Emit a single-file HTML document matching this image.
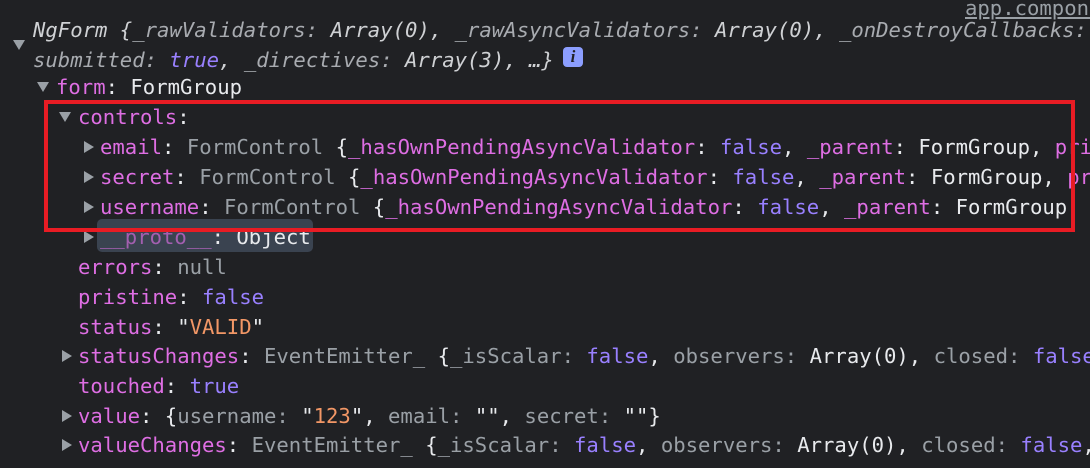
<!DOCTYPE html>
<html><head><meta charset="utf-8"><style>
html,body{margin:0;padding:0;}
body{width:1090px;height:468px;background:#202124;overflow:hidden;position:relative;font-family:Consolas,"DejaVu Sans Mono","Liberation Mono",monospace;font-size:20.6px;color:#e8eaed;}
.wrap{position:absolute;left:0;top:0;width:1090px;height:468px;overflow:hidden;}
.l{position:absolute;white-space:pre;line-height:30px;height:30px;}
.t{position:absolute;width:0;height:0;}
.d{border-left:6px solid transparent;border-right:6px solid transparent;border-top:10px solid #9aa0a6;}
.r{border-top:6px solid transparent;border-bottom:6px solid transparent;border-left:10px solid #9aa0a6;}
.k{color:#de6ee3}.g{color:#9aa0a6}.b{color:#9980ff}.s{color:#f29766}.i{font-style:italic;color:#cfd1d4}.ig{font-style:italic;color:#a8abb0}
.box{position:absolute;left:44px;top:100px;width:1023px;height:124px;border:4px solid #e81c24;}
</style></head><body><div class="wrap">
<div class="l g" style="left:965px;top:-7px;text-decoration:underline;">app.component</div>
<div class="t d" style="left:13px;top:40px"></div>
<div class="l i" style="left:33px;top:15px">NgForm {<span class="ig">_rawValidators:</span> Array(0), <span class="ig">_rawAsyncValidators:</span> Array(0), <span class="ig">_onDestroyCallbacks:</span> Array(0),</div>
<div class="l i" style="left:33px;top:45px"><span class="ig">submitted:</span> <span class="b">true</span>, <span class="ig">_directives:</span> Array(3), …}</div>
<div style="position:absolute;left:563px;top:47px;width:20px;height:20px;background:#8c9eff;border-radius:4px;color:#202124;font:bold 17px 'Liberation Serif',serif;font-style:italic;text-align:center;line-height:20px;">i</div>
<div class="t d" style="left:37px;top:82px"></div>
<div class="l" style="left:56px;top:72px"><span class="k">form</span>: FormGroup</div>
<div class="t d" style="left:59px;top:112px"></div>
<div class="l" style="left:78px;top:102px"><span class="k">controls</span>:</div>
<div class="t r" style="left:84px;top:141px"></div>
<div class="l" style="left:100px;top:132px"><span class="k">email</span>: <span class="g">FormControl</span> {<span class="k">_hasOwnPendingAsyncValidator</span>: <span class="b">false</span>, <span class="k">_parent</span>: FormGroup, <span class="k">pristine</span></div>
<div class="t r" style="left:84px;top:171px"></div>
<div class="l" style="left:100px;top:162px"><span class="k">secret</span>: <span class="g">FormControl</span> {<span class="k">_hasOwnPendingAsyncValidator</span>: <span class="b">false</span>, <span class="k">_parent</span>: FormGroup, <span class="k">pristine</span></div>
<div class="t r" style="left:84px;top:201px"></div>
<div class="l" style="left:100px;top:192px"><span class="k">username</span>: <span class="g">FormControl</span> {<span class="k">_hasOwnPendingAsyncValidator</span>: <span class="b">false</span>, <span class="k">_parent</span>: FormGroup, <span class="k">pristine</span></div>
<div style="position:absolute;left:97px;top:219px;width:216px;height:33px;background:#3a4350;border-radius:5px;"></div>
<div class="t r" style="left:84px;top:231px"></div>
<div class="l" style="left:100px;top:222px"><span style="color:#a35fb0">__proto__</span>: Object</div>
<div class="box"></div>
<div class="l" style="left:78px;top:252px"><span class="k">errors</span>: <span class="g">null</span></div>
<div class="l" style="left:78px;top:282px"><span class="k">pristine</span>: <span class="b">false</span></div>
<div class="l" style="left:78px;top:312px"><span class="k">status</span>: "<span class="s">VALID</span>"</div>
<div class="t r" style="left:62px;top:350px"></div>
<div class="l" style="left:78px;top:341px"><span class="k">statusChanges</span>: <span class="g">EventEmitter_</span> {<span class="g">_isScalar:</span> <span class="b">false</span>, <span class="g">observers:</span> Array(0), <span class="g">closed:</span> <span class="b">false</span>, …}</div>
<div class="l" style="left:78px;top:371px"><span class="k">touched</span>: <span class="b">true</span></div>
<div class="t r" style="left:62px;top:410px"></div>
<div class="l" style="left:78px;top:401px"><span class="k">value</span>: {<span class="g">username:</span> "<span class="s">123</span>", <span class="g">email:</span> "", <span class="g">secret:</span> ""}</div>
<div class="t r" style="left:62px;top:439px"></div>
<div class="l" style="left:78px;top:430px"><span class="k">valueChanges</span>: <span class="g">EventEmitter_</span> {<span class="g">_isScalar:</span> <span class="b">false</span>, <span class="g">observers:</span> Array(0), <span class="g">closed:</span> <span class="b">false</span>, …}</div>
</div></body></html>
